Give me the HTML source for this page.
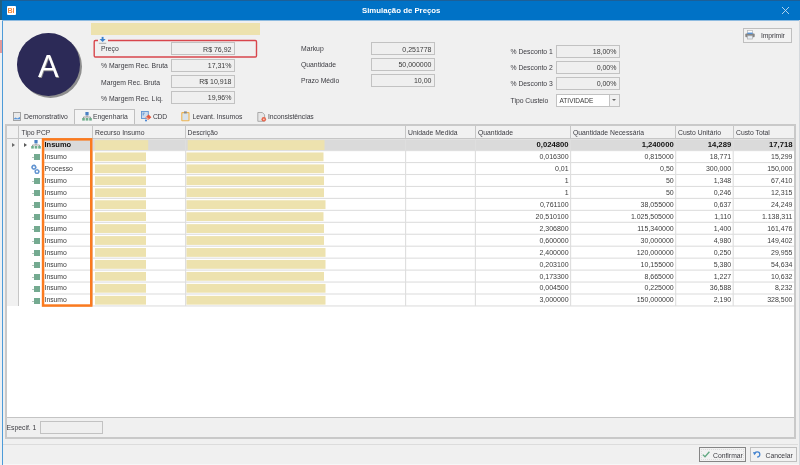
<!DOCTYPE html>
<html>
<head>
<meta charset="utf-8">
<title>Simulação de Preços</title>
<style>
html,body{margin:0;padding:0;}
body{width:800px;height:465px;overflow:hidden;position:relative;background:#f0f0f0;font-family:"Liberation Sans",sans-serif;font-size:6.8px;color:#222;}
*{box-sizing:border-box;}
.abs{position:absolute;}
#wrap{position:absolute;left:0;top:0;width:800px;height:465px;will-change:transform;}
#leftstrip{position:absolute;left:0;top:0;width:3px;height:465px;background:#edf0f3;}
#leftstrip i{position:absolute;left:0;width:2px;}
#titlebar{position:absolute;left:2px;top:0;width:798px;height:20px;background:#0072c6;border-top:1px solid #1d5f97;}
#title{position:absolute;left:1.2px;width:800px;top:6px;text-align:center;color:#fff;font-weight:bold;font-size:7.8px;line-height:9px;}
#winl{position:absolute;left:2px;top:20px;width:1px;height:445px;background:#4d9bd8;}
#winr{position:absolute;left:799px;top:20px;width:1px;height:445px;background:#d5d9dd;}
.lbl{position:absolute;font-size:6.8px;line-height:8px;color:#3c3c42;white-space:nowrap;}
.fld{position:absolute;height:13px;width:64px;border:1px solid #c2c2c2;background:#efefef;font-size:7px;line-height:11px;text-align:right;padding-right:2.5px;color:#3a3a3a;}
.tab{position:absolute;top:113px;font-size:6.8px;line-height:8px;color:#3c3c42;white-space:nowrap;}
#grid{position:absolute;left:5px;top:124px;width:791px;height:315px;background:#fff;border:2px solid #c9c9c9;}
#ghead{position:absolute;left:7px;top:126px;width:787px;height:13px;background:#f1f1f1;border-bottom:1px solid #c6c6c6;}
.hc{position:absolute;top:129px;font-size:6.8px;line-height:8px;color:#3c3c42;white-space:nowrap;}
.hl{position:absolute;top:126px;width:1px;height:13px;background:#c6c6c6;}
.row{position:absolute;left:0;width:800px;height:12px;}
.row.sel .t{font-weight:bold;color:#111;font-size:7.5px;}.row.sel .n{font-weight:bold;color:#111;font-size:7.7px;}
.t{position:absolute;top:1.9px;font-size:6.8px;line-height:8px;white-space:nowrap;color:#3c3c3c;}
.n{position:absolute;top:1.9px;font-size:7px;line-height:8px;white-space:nowrap;color:#3c3c3c;}
.yb{position:absolute;top:1px;height:10px;background:#ede2ae;}
.vl{position:absolute;top:139px;width:1px;height:167px;background:#e2e2e2;}
.dash{position:absolute;left:32px;top:6px;width:2px;height:1px;background:#b5c4bd;}
.sq{position:absolute;left:34px;top:3px;width:6px;height:6px;background:#74aa90;}
.ic{position:absolute;}
.arrow0{position:absolute;left:12px;top:4px;width:0;height:0;border-left:3px solid #6a6a6a;border-top:2.5px solid transparent;border-bottom:2.5px solid transparent;}
.arrow1{position:absolute;left:24px;top:4px;width:0;height:0;border-left:3px solid #5a5a5a;border-top:2.5px solid transparent;border-bottom:2.5px solid transparent;}
.btn{position:absolute;border:1px solid #bfbfbf;background:#f2f2f2;font-size:6.8px;line-height:8px;color:#333;white-space:nowrap;}
</style>
</head>
<body>
<div id="wrap">
<div id="leftstrip"><i style="top:0;height:20px;background:#1f5f82"></i><i style="top:40px;height:13px;background:#e39a9a"></i></div>
<div id="titlebar"></div>
<div id="title">Simulação de Preços</div>
<div id="winl"></div>
<div class="abs" style="left:2px;top:20px;width:798px;height:1px;background:#8ebbe0;"></div>
<div id="winr"></div>

<!-- app icon -->
<div class="abs" style="left:7px;top:6px;width:9px;height:9px;background:#fff;border-radius:1px;"></div>
<div class="abs" style="left:7.5px;top:7px;font-size:7.2px;line-height:7px;font-weight:bold;color:#f58a3c;letter-spacing:-0.1px;">BI</div>
<!-- close X -->
<svg class="abs" style="left:781px;top:6px" width="9" height="9" viewBox="0 0 9 9"><path d="M1 1L8 8M8 1L1 8" stroke="#c2dbf1" stroke-width="0.9"/></svg>

<!-- yellow bar -->
<div class="abs" style="left:91px;top:23px;width:169px;height:12px;background:#ede2ae;"></div>

<!-- avatar -->
<div class="abs" style="left:19px;top:35px;width:63px;height:63px;border-radius:50%;background:#8e8e8e;filter:blur(0.7px);"></div>
<div class="abs" style="left:17px;top:33px;width:62.5px;height:62.5px;border-radius:50%;background:#2c2a57;"></div>
<div class="abs" style="left:17px;top:51px;width:62.5px;text-align:center;font-size:31px;line-height:32px;color:#fff;text-shadow:0.8px 0.8px 0.5px #8a8a8a;">A</div>

<!-- red highlight -->
<svg class="abs" style="left:0;top:0" width="300" height="70" viewBox="0 0 300 70"><rect x="94.2" y="40.55" width="162.3" height="16.45" rx="1.2" fill="none" stroke="#d8464c" stroke-width="1.4"/></svg>
<svg class="abs" style="left:97.5px;top:36px" width="10" height="8.5" viewBox="0 0 10 8.5"><rect x="0" y="0" width="10" height="8.5" fill="#f0f0f0"/><path d="M4.6 0.9V4" stroke="#3a80cc" stroke-width="1.9"/><path d="M1.5 3L4.6 6.1L7.7 3Z" fill="#3a80cc"/><path d="M0.8 7.3H8.2" stroke="#9a9a9a" stroke-width="0.8"/></svg>

<!-- left column -->
<div class="lbl" style="left:101px;top:45px;">Preço</div>
<div class="lbl" style="left:101px;top:62px;">% Margem Rec. Bruta</div>
<div class="lbl" style="left:101px;top:79px;">Margem Rec. Bruta</div>
<div class="lbl" style="left:101px;top:95px;">% Margem Rec. Líq.</div>
<div class="fld" style="left:171px;top:42px;padding-top:1px;">R$ 76,92</div>
<div class="fld" style="left:171px;top:59px;">17,31%</div>
<div class="fld" style="left:171px;top:75px;">R$ 10,918</div>
<div class="fld" style="left:171px;top:91px;">19,96%</div>

<!-- middle column -->
<div class="lbl" style="left:301px;top:45px;">Markup</div>
<div class="lbl" style="left:301px;top:61px;">Quantidade</div>
<div class="lbl" style="left:301px;top:77px;">Prazo Médio</div>
<div class="fld" style="left:371px;top:42px;padding-top:1px;">0,251778</div>
<div class="fld" style="left:371px;top:58px;">50,000000</div>
<div class="fld" style="left:371px;top:74px;">10,00</div>

<!-- right column -->
<div class="lbl" style="left:510.5px;top:47.5px;">% Desconto 1</div>
<div class="lbl" style="left:510.5px;top:63.5px;">% Desconto 2</div>
<div class="lbl" style="left:510.5px;top:80px;">% Desconto 3</div>
<div class="lbl" style="left:510.5px;top:96.5px;">Tipo Custeio</div>
<div class="fld" style="left:556px;top:45px;">18,00%</div>
<div class="fld" style="left:556px;top:61px;">0,00%</div>
<div class="fld" style="left:556px;top:77px;">0,00%</div>
<div class="fld" style="left:556px;top:94px;background:#fff;text-align:left;padding-left:2.5px;font-size:6.5px;">ATIVIDADE</div>
<div class="abs" style="left:609px;top:95px;width:10px;height:11px;background:#f0f0f0;border-left:1px solid #c4c4c4;"></div>
<div class="abs" style="left:612.4px;top:99px;width:0;height:0;border-top:2.5px solid #666;border-left:2px solid transparent;border-right:2px solid transparent;"></div>

<!-- Imprimir -->
<div class="btn" style="left:743px;top:28px;width:49px;height:15px;"></div>
<svg class="abs" style="left:745.2px;top:30.3px" width="10" height="9.5" viewBox="0 0 10 9.5"><rect x="2.6" y="0.4" width="4.8" height="3.4" fill="#fcfcfc" stroke="#b5b5b5" stroke-width="0.7"/><rect x="0.3" y="3.5" width="9.4" height="3.7" rx="0.9" fill="#858585"/><rect x="2.4" y="2.6" width="5.2" height="1.3" fill="#4f8fd8"/><rect x="2.6" y="5.8" width="4.8" height="3.2" fill="#e6eef7" stroke="#b0b0b0" stroke-width="0.7"/></svg>
<div class="lbl" style="left:761px;top:32px;letter-spacing:-0.1px;">Imprimir</div>

<!-- tabs -->
<div class="abs" style="left:74px;top:109px;width:61px;height:16px;background:#f4f4f4;border:1px solid #c0c0c0;border-bottom:none;"></div>
<svg class="abs" style="left:13px;top:112px" width="8" height="9" viewBox="0 0 8 9"><rect x="0.5" y="0.5" width="7" height="8" fill="#e9e9e9" stroke="#9c9c9c" stroke-width="0.9"/><path d="M1 6.6L2.6 5.6L4.2 6.4L7 5V7.6H1Z" fill="#4f8fd8"/><path d="M1 7.4H7" stroke="#dfe9f5" stroke-width="0.6"/></svg>
<div class="tab" style="left:24px;">Demonstrativo</div>
<svg class="abs" style="left:82px;top:112px" width="10" height="9" viewBox="0 0 10 9"><rect x="3.4" y="0" width="3.2" height="3.4" fill="#4a80c4"/><path d="M5 3.4V5M1.5 6.3V5H8.5V6.3" stroke="#8a8a8a" stroke-width="0.8" fill="none"/><rect x="0.2" y="6" width="2.6" height="2.6" fill="#6fae8c"/><rect x="3.7" y="6" width="2.6" height="2.6" fill="#6fae8c"/><rect x="7.2" y="6" width="2.6" height="2.6" fill="#6fae8c"/></svg>
<div class="tab" style="left:93px;">Engenharia</div>
<svg class="abs" style="left:141px;top:111px" width="11" height="11" viewBox="0 0 11 11"><rect x="0.5" y="0.5" width="6.8" height="7" fill="#cddcee" stroke="#5f93d2" stroke-width="0.9"/><path d="M1.6 2.2H3.6M1.6 3.8H3" stroke="#4f86cc" stroke-width="0.9"/><path d="M4.4 6.4L7.6 3.6L10.4 6.2L7.2 9Z" fill="#e2573f"/><path d="M4.4 6.4L5.4 5.5L8.2 8.1L7.2 9Z" fill="#f0a898"/><circle cx="5" cy="9.6" r="1" fill="#3f7fd0"/></svg>
<div class="tab" style="left:153px;letter-spacing:-0.3px;">CDD</div>
<svg class="abs" style="left:181px;top:111px" width="9" height="10.5" viewBox="0 0 9 10.5"><rect x="0.8" y="1.6" width="7.2" height="8.2" rx="0.5" fill="#d9e3ec" stroke="#eeb552" stroke-width="1.1"/><rect x="3" y="0.4" width="2.8" height="2" fill="#8a8a8a"/></svg>
<div class="tab" style="left:192.5px;">Levant. Insumos</div>
<svg class="abs" style="left:257px;top:111.5px" width="10" height="10" viewBox="0 0 10 10"><path d="M0.8 0.5H5.4L7.6 2.8V9.3H0.8Z" fill="#e6e6e6" stroke="#9a9a9a" stroke-width="0.8"/><circle cx="6.8" cy="7.3" r="2.3" fill="#e5664c"/><circle cx="6.8" cy="7.3" r="0.9" fill="#f6c3b8"/></svg>
<div class="tab" style="left:268px;letter-spacing:-0.05px;">Inconsistências</div>

<!-- grid -->
<div id="grid"></div>
<div id="ghead"></div>
<div class="hl" style="left:18px"></div>
<div class="hl" style="left:92px"></div>
<div class="hl" style="left:185px"></div>
<div class="hl" style="left:405px"></div>
<div class="hl" style="left:475px"></div>
<div class="hl" style="left:570px"></div>
<div class="hl" style="left:675px"></div>
<div class="hl" style="left:733px"></div>
<div class="hc" style="left:21.5px">Tipo PCP</div>
<div class="hc" style="left:95px">Recurso Insumo</div>
<div class="hc" style="left:187.5px">Descrição</div>
<div class="hc" style="left:408px">Unidade Medida</div>
<div class="hc" style="left:478px">Quantidade</div>
<div class="hc" style="left:573px">Quantidade Necessária</div>
<div class="hc" style="left:678px">Custo Unitário</div>
<div class="hc" style="left:736px">Custo Total</div>
<!-- indicator column background -->
<div class="abs" style="left:7px;top:139px;width:12px;height:167px;background:#f1f1f1;border-right:1px solid #c6c6c6;"></div>
<svg class="abs" style="left:0;top:0" width="800" height="465" viewBox="0 0 800 465">
<rect x="42" y="139.2" width="752.0" height="10.90" fill="#dadada"/>
<rect x="42" y="150.05" width="752.0" height="1.1" fill="#dedede"/>
<rect x="94.7" y="140.10" width="53.5" height="9.9" fill="#ede2ae"/>
<rect x="187.7" y="140.10" width="136.8" height="9.9" fill="#ede2ae"/>
<rect x="42" y="162.00" width="752.0" height="1.1" fill="#dedede"/>
<rect x="95" y="152.45" width="51" height="8.8" fill="#ede2ae"/>
<rect x="186.4" y="152.45" width="137.1" height="8.8" fill="#ede2ae"/>
<rect x="42" y="173.95" width="752.0" height="1.1" fill="#dedede"/>
<rect x="95" y="164.40" width="51" height="8.8" fill="#ede2ae"/>
<rect x="186.4" y="164.40" width="137.6" height="8.8" fill="#ede2ae"/>
<rect x="42" y="185.90" width="752.0" height="1.1" fill="#dedede"/>
<rect x="95" y="176.35" width="51" height="8.8" fill="#ede2ae"/>
<rect x="186.4" y="176.35" width="137.6" height="8.8" fill="#ede2ae"/>
<rect x="42" y="197.85" width="752.0" height="1.1" fill="#dedede"/>
<rect x="95" y="188.30" width="51" height="8.8" fill="#ede2ae"/>
<rect x="186.4" y="188.30" width="137.6" height="8.8" fill="#ede2ae"/>
<rect x="42" y="209.80" width="752.0" height="1.1" fill="#dedede"/>
<rect x="95" y="200.25" width="51" height="8.8" fill="#ede2ae"/>
<rect x="186.4" y="200.25" width="139.1" height="8.8" fill="#ede2ae"/>
<rect x="42" y="221.75" width="752.0" height="1.1" fill="#dedede"/>
<rect x="95" y="212.20" width="51" height="8.8" fill="#ede2ae"/>
<rect x="186.4" y="212.20" width="137.1" height="8.8" fill="#ede2ae"/>
<rect x="42" y="233.70" width="752.0" height="1.1" fill="#dedede"/>
<rect x="95" y="224.15" width="51" height="8.8" fill="#ede2ae"/>
<rect x="186.4" y="224.15" width="137.6" height="8.8" fill="#ede2ae"/>
<rect x="42" y="245.65" width="752.0" height="1.1" fill="#dedede"/>
<rect x="95" y="236.10" width="51" height="8.8" fill="#ede2ae"/>
<rect x="186.4" y="236.10" width="137.6" height="8.8" fill="#ede2ae"/>
<rect x="42" y="257.60" width="752.0" height="1.1" fill="#dedede"/>
<rect x="95" y="248.05" width="51" height="8.8" fill="#ede2ae"/>
<rect x="186.4" y="248.05" width="139.1" height="8.8" fill="#ede2ae"/>
<rect x="42" y="269.55" width="752.0" height="1.1" fill="#dedede"/>
<rect x="95" y="260.00" width="51" height="8.8" fill="#ede2ae"/>
<rect x="186.4" y="260.00" width="139.1" height="8.8" fill="#ede2ae"/>
<rect x="42" y="281.50" width="752.0" height="1.1" fill="#dedede"/>
<rect x="95" y="271.95" width="51" height="8.8" fill="#ede2ae"/>
<rect x="186.4" y="271.95" width="137.6" height="8.8" fill="#ede2ae"/>
<rect x="42" y="293.45" width="752.0" height="1.1" fill="#dedede"/>
<rect x="95" y="283.90" width="51" height="8.8" fill="#ede2ae"/>
<rect x="186.4" y="283.90" width="139.1" height="8.8" fill="#ede2ae"/>
<rect x="42" y="305.40" width="752.0" height="1.1" fill="#dedede"/>
<rect x="95" y="295.85" width="51" height="8.8" fill="#ede2ae"/>
<rect x="186.4" y="295.85" width="139.1" height="8.8" fill="#ede2ae"/>
<rect x="91.90" y="139.2" width="1.1" height="166.75" fill="#dedede"/>
<rect x="185.05" y="139.2" width="1.1" height="166.75" fill="#dedede"/>
<rect x="405.05" y="139.2" width="1.1" height="166.75" fill="#dedede"/>
<rect x="474.85" y="139.2" width="1.1" height="166.75" fill="#dedede"/>
<rect x="570.05" y="139.2" width="1.1" height="166.75" fill="#dedede"/>
<rect x="675.15" y="139.2" width="1.1" height="166.75" fill="#dedede"/>
<rect x="732.65" y="139.2" width="1.1" height="166.75" fill="#dedede"/>
</svg>
<div class="row sel" style="top:139.20px">
<span class="arrow0"></span><span class="arrow1"></span><svg class="ic" style="left:31px;top:1px" width="10" height="9" viewBox="0 0 10 9"><rect x="3.4" y="0" width="3.2" height="3.4" fill="#4a80c4"/><path d="M5 3.4V5M1.5 6.3V5H8.5V6.3" stroke="#8a8a8a" stroke-width="0.8" fill="none"/><rect x="0.2" y="6" width="2.6" height="2.6" fill="#6fae8c"/><rect x="3.7" y="6" width="2.6" height="2.6" fill="#6fae8c"/><rect x="7.2" y="6" width="2.6" height="2.6" fill="#6fae8c"/></svg>
<span class="t" style="left:44.5px">Insumo</span>
<span class="n" style="right:231.4px">0,024800</span>
<span class="n" style="right:126.3px">1,240000</span>
<span class="n" style="right:68.8px">14,289</span>
<span class="n" style="right:7.5px">17,718</span>
</div>
<div class="row" style="top:151.15px">
<span class="dash"></span><span class="sq"></span>
<span class="t" style="left:44.5px">Insumo</span>
<span class="n" style="right:231.4px">0,016300</span>
<span class="n" style="right:126.3px">0,815000</span>
<span class="n" style="right:68.8px">18,771</span>
<span class="n" style="right:7.5px">15,299</span>
</div>
<div class="row" style="top:163.10px">
<svg class="ic" style="left:31px;top:0.5px" width="9" height="10" viewBox="0 0 9 10"><circle cx="2.9" cy="3.2" r="1.75" fill="none" stroke="#6797d3" stroke-width="1.35"/><circle cx="2.9" cy="3.2" r="2.3" fill="none" stroke="#5b8fcf" stroke-width="0.9" stroke-dasharray="0.9 0.5"/><circle cx="6" cy="7.6" r="1.75" fill="none" stroke="#6797d3" stroke-width="1.35"/><circle cx="6" cy="7.6" r="2.3" fill="none" stroke="#5b8fcf" stroke-width="0.8" stroke-dasharray="0.9 0.5"/></svg>
<span class="t" style="left:44.5px">Processo</span>
<span class="n" style="right:231.4px">0,01</span>
<span class="n" style="right:126.3px">0,50</span>
<span class="n" style="right:68.8px">300,000</span>
<span class="n" style="right:7.5px">150,000</span>
</div>
<div class="row" style="top:175.05px">
<span class="dash"></span><span class="sq"></span>
<span class="t" style="left:44.5px">Insumo</span>
<span class="n" style="right:231.4px">1</span>
<span class="n" style="right:126.3px">50</span>
<span class="n" style="right:68.8px">1,348</span>
<span class="n" style="right:7.5px">67,410</span>
</div>
<div class="row" style="top:187.00px">
<span class="dash"></span><span class="sq"></span>
<span class="t" style="left:44.5px">Insumo</span>
<span class="n" style="right:231.4px">1</span>
<span class="n" style="right:126.3px">50</span>
<span class="n" style="right:68.8px">0,246</span>
<span class="n" style="right:7.5px">12,315</span>
</div>
<div class="row" style="top:198.95px">
<span class="dash"></span><span class="sq"></span>
<span class="t" style="left:44.5px">Insumo</span>
<span class="n" style="right:231.4px">0,761100</span>
<span class="n" style="right:126.3px">38,055000</span>
<span class="n" style="right:68.8px">0,637</span>
<span class="n" style="right:7.5px">24,249</span>
</div>
<div class="row" style="top:210.90px">
<span class="dash"></span><span class="sq"></span>
<span class="t" style="left:44.5px">Insumo</span>
<span class="n" style="right:231.4px">20,510100</span>
<span class="n" style="right:126.3px">1.025,505000</span>
<span class="n" style="right:68.8px">1,110</span>
<span class="n" style="right:7.5px">1.138,311</span>
</div>
<div class="row" style="top:222.85px">
<span class="dash"></span><span class="sq"></span>
<span class="t" style="left:44.5px">Insumo</span>
<span class="n" style="right:231.4px">2,306800</span>
<span class="n" style="right:126.3px">115,340000</span>
<span class="n" style="right:68.8px">1,400</span>
<span class="n" style="right:7.5px">161,476</span>
</div>
<div class="row" style="top:234.80px">
<span class="dash"></span><span class="sq"></span>
<span class="t" style="left:44.5px">Insumo</span>
<span class="n" style="right:231.4px">0,600000</span>
<span class="n" style="right:126.3px">30,000000</span>
<span class="n" style="right:68.8px">4,980</span>
<span class="n" style="right:7.5px">149,402</span>
</div>
<div class="row" style="top:246.75px">
<span class="dash"></span><span class="sq"></span>
<span class="t" style="left:44.5px">Insumo</span>
<span class="n" style="right:231.4px">2,400000</span>
<span class="n" style="right:126.3px">120,000000</span>
<span class="n" style="right:68.8px">0,250</span>
<span class="n" style="right:7.5px">29,955</span>
</div>
<div class="row" style="top:258.70px">
<span class="dash"></span><span class="sq"></span>
<span class="t" style="left:44.5px">Insumo</span>
<span class="n" style="right:231.4px">0,203100</span>
<span class="n" style="right:126.3px">10,155000</span>
<span class="n" style="right:68.8px">5,380</span>
<span class="n" style="right:7.5px">54,634</span>
</div>
<div class="row" style="top:270.65px">
<span class="dash"></span><span class="sq"></span>
<span class="t" style="left:44.5px">Insumo</span>
<span class="n" style="right:231.4px">0,173300</span>
<span class="n" style="right:126.3px">8,665000</span>
<span class="n" style="right:68.8px">1,227</span>
<span class="n" style="right:7.5px">10,632</span>
</div>
<div class="row" style="top:282.60px">
<span class="dash"></span><span class="sq"></span>
<span class="t" style="left:44.5px">Insumo</span>
<span class="n" style="right:231.4px">0,004500</span>
<span class="n" style="right:126.3px">0,225000</span>
<span class="n" style="right:68.8px">36,588</span>
<span class="n" style="right:7.5px">8,232</span>
</div>
<div class="row" style="top:294.55px">
<span class="dash"></span><span class="sq"></span>
<span class="t" style="left:44.5px">Insumo</span>
<span class="n" style="right:231.4px">3,000000</span>
<span class="n" style="right:126.3px">150,000000</span>
<span class="n" style="right:68.8px">2,190</span>
<span class="n" style="right:7.5px">328,500</span>
</div>
<!-- orange highlight -->
<svg class="abs" style="left:0;top:0" width="800" height="465" viewBox="0 0 800 465"><rect x="43.05" y="139.35" width="48.2" height="166.2" fill="none" stroke="#fb7a1e" stroke-width="2.5"/></svg>

<!-- footer of grid -->
<div class="abs" style="left:7px;top:417px;width:787px;height:20px;background:#f0f0f0;border-top:1px solid #c4c4c4;"></div>
<div class="lbl" style="left:6.5px;top:423.5px;">Especif. 1</div>
<div class="fld" style="left:40px;top:421px;width:63px;"></div>

<!-- bottom buttons -->
<div class="abs" style="left:3px;top:464px;width:796px;height:1px;background:#f7f7f7;"></div>
<div class="abs" style="left:3px;top:444px;width:795px;height:1px;background:#dcdcdc;"></div>
<div class="btn" style="left:699px;top:447px;width:47px;height:15px;border-color:#858585;"></div>
<div class="abs" style="left:701px;top:449px;width:43px;height:11px;border:1px dotted #dcdcdc;"></div>
<svg class="abs" style="left:702px;top:451px" width="8" height="7" viewBox="0 0 8 7"><path d="M0.8 3.6L3 5.8L7.4 0.8" stroke="#62a882" stroke-width="1.3" fill="none"/></svg>
<div class="lbl" style="left:713px;top:451.5px;">Confirmar</div>
<div class="btn" style="left:750px;top:447px;width:47px;height:15px;"></div>
<svg class="abs" style="left:753px;top:451px" width="8" height="7" viewBox="0 0 8 7"><path d="M1.6 3.2A2.6 2.6 0 1 1 4.2 6" stroke="#4785cf" stroke-width="1.3" fill="none"/><path d="M0 1L3.4 1.4L1.2 4.2Z" fill="#4785cf"/></svg>
<div class="lbl" style="left:765.5px;top:451.5px;">Cancelar</div>
</div>
</body>
</html>
